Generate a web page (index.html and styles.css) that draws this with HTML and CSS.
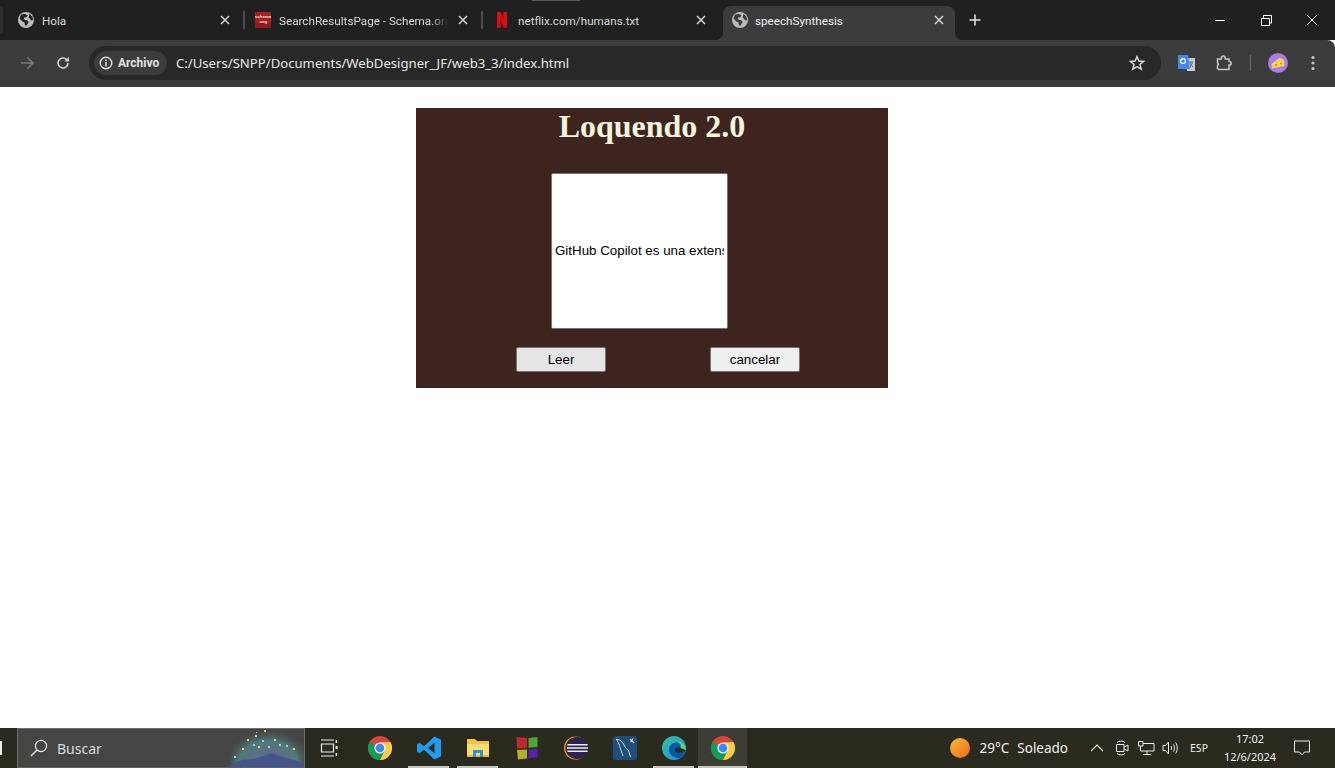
FILE: index.html
```html
<!DOCTYPE html>
<html lang="es">
<head>
<meta charset="utf-8">
<title>speechSynthesis</title>
<link rel="stylesheet" href="styles.css">
</head>
<body>
<svg class="defs" width="0" height="0" aria-hidden="true">
  <defs>
    <symbol id="globe" viewBox="0 0 16 16">
      <circle cx="8" cy="8" r="8" fill="#b9bcbc"/>
      <path class="land" d="M3 2.6 L7.2 2 L9.6 3.6 L8 5.4 L6.6 5.2 L5.6 6.6 L7 8 L9.4 8.2 L10.6 10 L8.6 13.6 L7 13.4 L6.6 10.6 L4.4 9.6 L1.6 6.4 Z M11.6 1.8 L14.6 5 L15 8 L13.4 8.6 L12 6.8 L10.6 5.4 Z"/>
    </symbol>
    <symbol id="close" viewBox="0 0 10 10">
      <path d="M1 1 L9 9 M9 1 L1 9" stroke="#d8d8d8" stroke-width="1.5" fill="none"/>
    </symbol>
    <symbol id="chrome" viewBox="0 0 24 24">
      <circle cx="12" cy="12" r="12" fill="#db4437"/>
      <path d="M12 12 L1.6 6 A12 12 0 0 0 12 24 L18 13.6 Z" fill="#0f9d58"/>
      <path d="M12 6.6 L22.4 6 A12 12 0 0 1 12 24 L17.2 13.6 Z" fill="#ffcd40"/>
      <circle cx="12" cy="12" r="5.6" fill="#fff"/>
      <circle cx="12" cy="12" r="4.4" fill="#4285f4"/>
    </symbol>
  </defs>
</svg>
<div class="window">
  <header class="tabbar">
    <div class="tabstub"></div>
    <div class="tab first">
      <svg class="fav"><use href="#globe"/></svg>
      <span class="tabtitle">Hola</span>
      <svg class="tabclose"><use href="#close"/></svg>
    </div>
    <i class="tabsep"></i>
    <div class="tab">
      <svg class="fav" viewBox="0 0 16 16"><rect width="16" height="16" fill="#a81f1f"/><rect y="11" width="16" height="5" fill="#8c1c1c"/><text class="favtext" x="8" y="6">schema</text><text class="favtext" x="8" y="10.5">.org</text></svg>
      <span class="tabtitle fade">SearchResultsPage - Schema.org</span>
      <svg class="tabclose"><use href="#close"/></svg>
    </div>
    <i class="tabsep"></i>
    <div class="tab">
      <svg class="fav netflix" viewBox="0 0 16 16"><path d="M3 0 H6.6 L9.4 8 V0 H13 V16 C11.8 15.7 10.6 15.6 9.6 15.5 L6.6 7.6 V15.5 C5.4 15.6 4.2 15.7 3 16 Z" fill="#e50914"/></svg>
      <span class="tabtitle">netflix.com/humans.txt</span>
      <svg class="tabclose"><use href="#close"/></svg>
    </div>
    <div class="tab active">
      <svg class="fav"><use href="#globe"/></svg>
      <span class="tabtitle">speechSynthesis</span>
      <svg class="tabclose"><use href="#close"/></svg>
    </div>
    <svg class="newtab" viewBox="0 0 12 12"><path d="M6 0.5 V11.5 M0.5 6 H11.5" stroke="#e3e3e3" stroke-width="1.5" fill="none"/></svg>
    <div class="winctrls">
      <svg class="winbtn" viewBox="0 0 46 20"><path d="M18 10.5 H28" stroke="#fff" fill="none"/></svg>
      <svg class="winbtn" viewBox="0 0 46 20"><path d="M18.5 8.5 H26.5 V15.5 H18.5 Z M20.5 8.5 V5.5 H28.5 V13 H26.5" stroke="#fff" fill="none"/></svg>
      <svg class="winbtn" viewBox="0 0 46 20"><path d="M18 5 L28 15 M28 5 L18 15" stroke="#fff" fill="none"/></svg>
    </div>
  </header>
  <nav class="toolbar">
    <svg class="tbicon arrow" viewBox="0 0 14 14"><path d="M1 7 H13 M7.5 1.5 L13 7 L7.5 12.5" stroke="#77797a" stroke-width="1.6" fill="none"/></svg>
    <svg class="tbicon reload" viewBox="0 0 14 14"><path d="M12 7 A5 5 0 1 1 10.4 3.3 L12.4 4.8" stroke="#d0d2d2" stroke-width="1.6" fill="none"/><path d="M12.9 0.8 V5.4 H8.4 Z" fill="#d0d2d2"/></svg>
    <div class="omnibox">
      <div class="chip">
        <svg class="infoicon" viewBox="0 0 14 14"><circle cx="7" cy="7" r="5.8" stroke="#e3e3e3" stroke-width="1.4" fill="none"/><path d="M7 6 V10.4 M7 3.6 V5" stroke="#e3e3e3" stroke-width="1.5"/></svg>
        <span class="chiptext">Archivo</span>
      </div>
      <span class="url">C:/Users/SNPP/Documents/WebDesigner_JF/web3_3/index.html</span>
      <svg class="star" viewBox="0 0 16 16"><path d="M8 1.6 L9.9 6 L14.7 6.4 L11 9.5 L12.2 14.2 L8 11.7 L3.8 14.2 L5 9.5 L1.3 6.4 L6.1 6 Z" stroke="#d8d8d8" stroke-width="1.5" fill="none"/></svg>
    </div>
    <svg class="translate" viewBox="0 0 18 16"><path d="M7 3 H17 V16 H9 Z" fill="#c9ced1"/><path d="M11 7 H15 M13 6 V7.4 M11.6 13 L14.6 7.6 M11.6 8 L15 12" stroke="#5b6b78" fill="none"/><path d="M0 0 H10 L12 14 H0 Z" fill="#4285f4"/><circle cx="5" cy="6" r="2.4" stroke="#fff" stroke-width="1.2" fill="none"/></svg>
    <svg class="puzzle" viewBox="0 0 16 16"><path d="M1.5 4 H5.4 V3 A1.9 1.9 0 0 1 9.2 3 V4 H13 V6.4 H13.4 A1.8 1.8 0 0 1 13.4 10 H13 V14.5 H2.6 L1.5 13.4 V10.6 L2.4 9.2 L1.5 7.8 Z" stroke="#c6c8c8" stroke-width="1.5" fill="none"/></svg>
    <i class="tbsep"></i>
    <svg class="avatar" viewBox="0 0 20 20"><circle cx="10" cy="10" r="10" fill="#a87be8"/><path d="M3.5 11 L11 5 C14 5 16 6.5 16.5 9 L16.5 13 L4 15.5 Z" fill="#f6d34c"/><circle cx="8" cy="12" r="1.2" fill="#c99b20"/><circle cx="13" cy="10.5" r="1" fill="#c99b20"/></svg>
    <svg class="kebab" viewBox="0 0 4 16"><circle cx="2" cy="2.5" r="1.6" fill="#c6c8c8"/><circle cx="2" cy="8" r="1.6" fill="#c6c8c8"/><circle cx="2" cy="13.5" r="1.6" fill="#c6c8c8"/></svg>
  </nav>
  <main class="page">
    <section class="panel">
      <h1 class="title">Loquendo 2.0</h1>
      <input class="textbox" type="text" value="GitHub Copilot es una extensión de Visual Studio Code">
      <div class="actions">
        <button class="btn pressed" type="button">Leer</button>
        <button class="btn" type="button">cancelar</button>
      </div>
    </section>
  </main>
  <footer class="taskbar">
    <div class="startstub"></div>
    <div class="search">
      <svg class="searchicon" viewBox="0 0 18 18"><circle cx="11" cy="7" r="5.6" stroke="#e8e8e8" stroke-width="1.2" fill="none"/><path d="M7 11 L1 17" stroke="#e8e8e8" stroke-width="1.4"/></svg>
      <span class="searchtext">Buscar</span>
      <svg class="searchart" viewBox="0 0 80 40">
        <defs><radialGradient id="glow" cx="50%" cy="60%" r="60%"><stop offset="0" stop-color="#6a6296"/><stop offset=".65" stop-color="#4f7a78"/><stop offset="1" stop-color="#454545" stop-opacity="0"/></radialGradient></defs>
        <ellipse cx="44" cy="30" rx="38" ry="30" fill="url(#glow)"/>
        <path d="M0 40 L18 32 L30 31 L48 25 L62 30 L78 34 V40 Z" fill="#45558a"/>
        <g fill="#f2d14f"><rect x="23" y="11" width="2" height="2"/><rect x="50" y="11" width="2" height="2"/><rect x="34" y="18" width="2" height="2"/><rect x="69" y="20" width="2" height="2"/><rect x="18" y="20" width="2" height="2"/><rect x="32" y="4" width="1" height="1"/><rect x="40" y="2" width="2" height="2"/></g>
        <g fill="#a9c7ee"><rect x="31" y="7" width="2" height="2"/><rect x="29" y="16" width="2" height="2"/><rect x="38" y="12" width="2" height="2"/><rect x="10" y="28" width="2" height="2"/><rect x="44" y="18" width="2" height="2"/><rect x="62" y="17" width="2" height="2"/><rect x="55" y="16" width="2" height="2"/></g>
      </svg>
    </div>
    <svg class="taskview" viewBox="0 0 18 18"><path d="M1 1 H14 M1 17 H14 M1.5 5 H13.5 V13 H1.5 Z" stroke="#eee" stroke-width="1.2" fill="none"/><rect x="15.6" y="1" width="1.4" height="3" fill="#eee"/><rect x="15.6" y="7" width="2" height="3" fill="#eee"/><rect x="15.6" y="14" width="1.4" height="3" fill="#eee"/></svg>
    <div class="apps">
      <div class="app"><svg class="appicon"><use href="#chrome"/></svg></div>
      <div class="app open"><svg class="appicon" viewBox="0 0 24 24"><path d="M17.5 0.5 L24 3.5 V20.5 L17.5 23.5 L7 13.8 L2.6 17.2 L0 15.8 V8.2 L2.6 6.8 L7 10.2 Z M17.5 6.8 L11 12 L17.5 17.2 Z" fill="#1f9cf0"/></svg></div>
      <div class="app open"><svg class="appicon" viewBox="0 0 24 24"><path d="M1 3 H9 L11 5 H23 V21 H1 Z" fill="#f5c342"/><rect x="1" y="8" width="22" height="13" fill="#fbdc75"/><rect x="1" y="19" width="22" height="2" fill="#f2b632"/><path d="M7 14 H17 V21 H14 V17 H10 V21 H7 Z" fill="#2d93d8"/></svg></div>
      <div class="app"><svg class="appicon" viewBox="0 0 24 24"><path d="M1.5 1 L12 2 V12 L2 12.5 Z" fill="#c1272d"/><path d="M13.5 2 L22.5 1 V11 L13.5 11.8 Z" fill="#4da82f"/><path d="M2 14 L12 13.6 V22.5 L3 23.5 Z" fill="#b5b12a"/><path d="M13.5 13.4 L22.5 12.6 V21 L13.5 22.4 Z" fill="#5a1fb0"/></svg></div>
      <div class="app"><svg class="appicon" viewBox="0 0 24 24"><circle cx="11.5" cy="12" r="11.5" fill="#f7941e"/><circle cx="12.4" cy="12" r="11" fill="#2a2a1e"/><circle cx="13.5" cy="12" r="10.5" fill="#2c2255"/><path d="M3.4 8.8 H23.6 M3 12 H24 M3.4 15.2 H23.6" stroke="#eee" stroke-width="1.4" fill="none"/></svg></div>
      <div class="app"><svg class="appicon" viewBox="0 0 24 24"><rect width="24" height="24" rx="2.5" fill="#1f4e79"/><path d="M3 3.5 C7 3 9.5 6 11 9 C12.5 12 14 13.5 15.5 14.5 L17.5 21 M6 8 C7 12 8 14 10 20 M3.5 3.5 L6 8" stroke="#e8eef4" stroke-width=".9" fill="none"/><path d="M17 3 L21 7 M20 2.5 L17.5 6" stroke="#e8eef4" stroke-width="1.1" fill="none"/></svg></div>
      <div class="app open"><svg class="appicon" viewBox="0 0 24 24"><defs><linearGradient id="edgeA" x1="0" y1="0" x2="1" y2="1"><stop offset="0" stop-color="#35c1a0"/><stop offset="1" stop-color="#1f8fd8"/></linearGradient></defs><circle cx="12" cy="12" r="12" fill="url(#edgeA)"/><path d="M24 14 C24 8 19 6 14 6.4 C8.6 7 6.6 11 7 14.6 C7.6 19.6 13 23 18.4 22 C21.4 20.4 23.4 17.6 24 14 Z" fill="#0b57a8"/><path d="M24 14 C20 18 13 17 13 14 C13 12.6 14.6 11.6 16.4 11.6 L24 12 Z" fill="#2a2a1e"/><path d="M24 14 C24 8 19 5 14 5.6 C18 7 19.6 9.6 18.6 12 L23.8 14 Z" fill="#58d27d"/></svg></div>
      <div class="app open current"><svg class="appicon"><use href="#chrome"/></svg></div>
    </div>
    <div class="tray">
      <span class="sun"></span>
      <span class="weather temp">29°C</span>
      <span class="weather sunny">Soleado</span>
      <svg class="trayicon chevron" viewBox="0 0 14 8"><path d="M1 7 L7 1 L13 7" stroke="#eee" stroke-width="1.2" fill="none"/></svg>
      <svg class="trayicon cam" viewBox="0 0 14 16"><path d="M2 2.5 C4 0.6 8 0.6 10 2.5 M2 13.5 C4 15.4 8 15.4 10 13.5" stroke="#ddd" fill="none"/><path d="M1.5 4.5 H9 V11.5 H1.5 Z M9 7 L13 5 V11 L9 9" stroke="#eee" fill="none"/></svg>
      <svg class="trayicon net" viewBox="0 0 17 14"><path d="M0.5 0.5 H5 V5 H0.5 Z M5 2.5 H16 V10 H2.5 V5 M9 10 V13.5 M5 13.5 H13" stroke="#eee" fill="none"/></svg>
      <svg class="trayicon vol" viewBox="0 0 17 14"><path d="M1 4.5 H3.5 L6.5 1 V13 L3.5 9.5 H1 Z M9 5 C9.8 6 9.8 8 9 9 M11.4 3.4 C12.8 5.2 12.8 8.8 11.4 10.6 M13.6 1.6 C15.8 4.4 15.8 9.6 13.6 12.4" stroke="#eee" fill="none"/></svg>
      <span class="lang">ESP</span>
      <div class="clock"><span>17:02</span><span>12/6/2024</span></div>
      <svg class="notif" viewBox="0 0 16 16"><path d="M0.5 1 H15.5 V12 H10.5 L8 14.8 L5.5 12 H0.5 Z" stroke="#eee" fill="none"/></svg>
    </div>
  </footer>
</div>
</body>
</html>
```
FILE: styles.css
```css
* { box-sizing: border-box; }
html, body { margin: 0; height: 100%; }
body { overflow: hidden; background: #fff; }
.defs { position: absolute; }
.window { height: 768px; display: flex; flex-direction: column; }

.tabbar { height: 40px; flex: none; display: flex; align-items: flex-end; background: #1f2121; padding-left: 8px; position: relative; color: #d6d8d8; font: 11.7px Roboto, "Noto Sans", sans-serif; }
.tabbar::before { content: ""; position: absolute; left: 532px; top: 0; width: 48px; height: 1px; background: #55585a; }
.tabstub { position: absolute; left: 0; top: 6px; width: 3px; height: 28px; background: #2c2d2e; border-radius: 0 8px 8px 0; }
.tab { width: 236px; height: 34px; flex: none; display: flex; align-items: center; padding: 0 13px 6px 10px; position: relative; --land: #1f2121; }
.tab.first { width: 235px; }
.tabsep { width: 2px; height: 18px; margin: 0 0 11px 0; background: #4a4c4d; flex: none; }
.fav { width: 16px; height: 16px; flex: none; margin-right: 8px; }
.netflix { margin-left: 1px; }
.land { fill: var(--land); }
.favtext { fill: #f6e4e4; font: bold 4.4px "Liberation Sans", sans-serif; text-anchor: middle; }
.tabtitle { flex: 1; white-space: nowrap; overflow: hidden; min-width: 0; padding-top: 1px; }
.fade { -webkit-mask-image: linear-gradient(to right, #000 90%, transparent 100%); mask-image: linear-gradient(to right, #000 90%, transparent 100%); }
.tabclose { width: 10px; height: 10px; flex: none; margin-left: 10px; }
.tab.active { width: 232px; margin-left: 4px; background: #3c3c3c; border-radius: 8px 8px 0 0; color: #f0f0f0; padding: 0 11px 6px 9px; --land: #3c3c3c; }
.tab.active .fav { margin-right: 7px; }
.tab.active::before, .tab.active::after { content: ""; position: absolute; bottom: 0; width: 8px; height: 8px; }
.tab.active::before { left: -8px; background: radial-gradient(circle at 0 0, transparent 8px, #3c3c3c 8.5px); }
.tab.active::after { right: -8px; background: radial-gradient(circle at 100% 0, transparent 8px, #3c3c3c 8.5px); }
.newtab { width: 12px; height: 12px; flex: none; margin: 0 0 14px 14px; }
.winctrls { margin-left: auto; display: flex; align-self: flex-start; margin-top: 10px; }
.winbtn { width: 46px; height: 20px; flex: none; }

.toolbar { height: 47px; flex: none; display: flex; align-items: center; padding-bottom: 1px; background: #3c3c3c; border-top-right-radius: 8px; }
.tbicon { width: 14px; height: 14px; flex: none; }
.arrow { margin-left: 20px; }
.reload { margin-left: 22px; }
.omnibox { width: 1072px; height: 34px; margin-left: 19px; flex: none; background: #282828; border-radius: 17px; display: flex; align-items: center; padding: 0 16px 0 5px; }
.chip { width: 73px; height: 24px; border-radius: 12px; background: #3c3c3c; display: flex; align-items: center; padding-left: 5px; flex: none; }
.infoicon { width: 14px; height: 14px; flex: none; }
.chiptext { margin-left: 5px; color: #e3e3e3; font: bold 12px Roboto, sans-serif; }
.url { margin-left: 9px; color: #e8eaea; font: 13.15px "Noto Sans", sans-serif; white-space: nowrap; }
.star { width: 16px; height: 16px; margin-left: auto; flex: none; }
.translate { width: 18px; height: 16px; margin-left: 17px; flex: none; }
.puzzle { width: 16px; height: 16px; margin-left: 20px; flex: none; }
.tbsep { width: 1px; height: 16px; margin-left: 18px; background: #6a6a6a; flex: none; }
.avatar { width: 20px; height: 20px; margin-left: 17px; flex: none; }
.kebab { width: 4px; height: 16px; margin-left: 23px; flex: none; }

.page { flex: 1; min-height: 0; background: #fff; padding-top: 21px; }
.panel { width: 472px; height: 280px; margin-left: 416px; background: #3e241e; display: flex; flex-direction: column; }
.title { margin: 0; height: 38px; text-align: center; color: #f5f5dc; font: bold 32px/37px "Liberation Serif", serif; }
.textbox { width: 177px; height: 156px; margin: 27px 0 0 135px; padding: 0 3px 2px; border: 1px solid #767676; border-radius: 2px; background: #fff; color: #000; font: 13.33px "Liberation Sans", Arial, sans-serif; }
.actions { display: flex; gap: 104px; margin: 18px 0 0 100px; }
.btn { width: 90px; height: 25px; padding: 0; border: 1px solid #767676; border-radius: 2px; background: #efefef; color: #000; font: 13.33px "Liberation Sans", Arial, sans-serif; }
.btn.pressed { background: #e5e5e5; }

.taskbar { height: 40px; flex: none; display: flex; align-items: center; background: #2a2a1e; position: relative; color: #eee; font-family: "Noto Sans", sans-serif; }
.startstub { width: 2px; height: 14px; background: #eee; flex: none; }
.search { width: 288px; height: 40px; margin-left: 15px; background: #454545; border: 1px solid #6e6e6e; border-bottom-color: #5e5e5e; display: flex; align-items: center; flex: none; overflow: hidden; }
.searchicon { width: 18px; height: 18px; margin-left: 12px; flex: none; }
.searchtext { margin-left: 9px; font-size: 14px; color: #dcdcdc; }
.searchart { width: 80px; height: 40px; margin-left: auto; flex: none; }
.taskview { width: 18px; height: 18px; margin-left: 15px; flex: none; }
.apps { display: flex; margin-left: 17px; height: 40px; flex: none; }
.app { width: 49px; height: 40px; display: flex; align-items: center; justify-content: center; position: relative; }
.app.open::after { content: ""; position: absolute; left: 4px; right: 4px; bottom: 0; height: 2px; background: #c4c4c0; }
.app.current { background: #3d3d36; }
.app.current::after { left: 0; right: 0; }
.appicon { width: 24px; height: 24px; flex: none; }
.tray { margin-left: auto; display: flex; align-items: center; height: 40px; flex: none; }
.sun { width: 20px; height: 20px; border-radius: 50%; background: linear-gradient(135deg, #f5b942, #f26c0d); flex: none; }
.weather { font-size: 13.5px; }
.temp { margin-left: 10px; }
.sunny { margin-left: 8px; }
.trayicon { flex: none; }
.chevron { width: 14px; height: 8px; margin-left: 22px; }
.cam { width: 14px; height: 16px; margin-left: 11px; }
.net { width: 17px; height: 14px; margin-left: 9px; }
.vol { width: 17px; height: 14px; margin-left: 7px; }
.lang { margin-left: 11px; font-size: 10.5px; }
.clock { width: 74px; margin-left: 5px; display: flex; flex-direction: column; align-items: center; font-size: 11px; line-height: 18px; }
.notif { width: 16px; height: 16px; margin: 0 25px 0 7px; flex: none; }
```
